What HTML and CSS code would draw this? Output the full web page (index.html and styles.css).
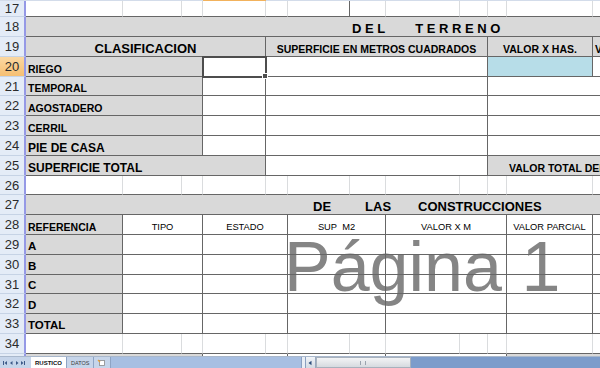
FILE: index.html
```html
<!DOCTYPE html>
<html lang="es">
<head>
<meta charset="utf-8">
<title>RUSTICO</title>
<link rel="stylesheet" href="styles.css">
</head>
<body>
<div class="app">
  <div class="colhead"><div class="ch-a"></div><div class="ch-sel"></div><div class="ch-b"></div></div>
  <div class="sheet">
    <!-- 17 -->
    <div class="rh">17</div>
    <div class="c lt bd-b"></div><div class="c lt bd-b"></div><div class="c lt bd-b"></div><div class="c lt bd-b"></div>
    <div class="c lt bd-b"></div><div class="c bd-r bd-b"></div><div class="c lt bd-b"></div><div class="c lt bd-b"></div>
    <div class="c lt bd-b"></div><div class="c lt bd-b"></div><div class="c lt bd-b"></div><div class="c lt bd-b"></div>
    <!-- 18 -->
    <div class="rh">18</div>
    <div class="c s12 gray bd-b title t-terreno"><span>D E L</span><span class="gap-terreno">T E R R E N O</span></div>
    <!-- 19 -->
    <div class="rh">19</div>
    <div class="c s4 gray bd-r bd-b ctr b f13">CLASIFICACION</div>
    <div class="c s5 gray bd-r bd-b ctr b">SUPERFICIE EN METROS CUADRADOS</div>
    <div class="c s2 gray bd-r bd-b ctr b">VALOR X HAS.</div>
    <div class="c gray bd-b b pl2">VALOR TOTAL</div>
    <!-- 20 -->
    <div class="rh rh-sel">20</div>
    <div class="c s3 gray bd-r bd-b lbl">RIEGO</div>
    <div class="c bd-r bd-b sel"></div>
    <div class="c s5 bd-r bd-b"></div>
    <div class="c s2 blue bd-r bd-b"></div>
    <div class="c bd-b"></div>
    <!-- 21 -->
    <div class="rh">21</div>
    <div class="c s3 gray bd-r bd-b lbl">TEMPORAL</div>
    <div class="c bd-r bd-b"></div>
    <div class="c s5 bd-r bd-b"></div>
    <div class="c s3 bd-b"></div>
    <!-- 22 -->
    <div class="rh">22</div>
    <div class="c s3 gray bd-r bd-b lbl">AGOSTADERO</div>
    <div class="c bd-r bd-b"></div>
    <div class="c s5 bd-r bd-b"></div>
    <div class="c s3 bd-b"></div>
    <!-- 23 -->
    <div class="rh">23</div>
    <div class="c s3 gray bd-r bd-b lbl">CERRIL</div>
    <div class="c bd-r bd-b"></div>
    <div class="c s5 bd-r bd-b"></div>
    <div class="c s3 bd-b"></div>
    <!-- 24 -->
    <div class="rh">24</div>
    <div class="c s3 gray bd-r bd-b lbl f12">PIE DE CASA</div>
    <div class="c bd-r bd-b"></div>
    <div class="c s5 bd-r bd-b"></div>
    <div class="c s3 bd-b"></div>
    <!-- 25 -->
    <div class="rh">25</div>
    <div class="c s4 gray bd-r bd-b lbl f12">SUPERFICIE TOTAL</div>
    <div class="c s5 bd-r bd-b"></div>
    <div class="c s3 gray bd-b b pl-total">VALOR TOTAL DEL TERRENO</div>
    <!-- 26 -->
    <div class="rh">26</div>
    <div class="c lt bd-b"></div><div class="c lt bd-b"></div><div class="c lt bd-b"></div><div class="c lt bd-b"></div>
    <div class="c lt bd-b"></div><div class="c lt bd-b"></div><div class="c lt bd-b"></div><div class="c lt bd-b"></div>
    <div class="c lt bd-b"></div><div class="c lt bd-b"></div><div class="c lt bd-b"></div><div class="c lt bd-b"></div>
    <!-- 27 -->
    <div class="rh">27</div>
    <div class="c s12 gray bd-b title t-constr"><span>DE</span><span class="gap-las">LAS</span><span class="gap-con">CONSTRUCCIONES</span></div>
    <!-- 28 -->
    <div class="rh">28</div>
    <div class="c gray bd-r bd-b lbl">REFERENCIA</div>
    <div class="c s2 bd-r bd-b ctr sub">TIPO</div>
    <div class="c s2 bd-r bd-b ctr sub">ESTADO</div>
    <div class="c s2 bd-r bd-b ctr sub">SUP&nbsp; M2</div>
    <div class="c s3 bd-r bd-b ctr sub">VALOR X M</div>
    <div class="c bd-r bd-b ctr sub">VALOR PARCIAL</div>
    <div class="c bd-b"></div>
    <!-- 29 -->
    <div class="rh">29</div>
    <div class="c gray bd-r bd-b lbl f115">A</div>
    <div class="c s2 bd-r bd-b"></div><div class="c s2 bd-r bd-b"></div><div class="c s2 bd-r bd-b"></div>
    <div class="c s3 bd-r bd-b"></div><div class="c bd-r bd-b"></div><div class="c bd-b"></div>
    <!-- 30 -->
    <div class="rh">30</div>
    <div class="c gray bd-r bd-b lbl f115">B</div>
    <div class="c s2 bd-r bd-b"></div><div class="c s2 bd-r bd-b"></div><div class="c s2 bd-r bd-b"></div>
    <div class="c s3 bd-r bd-b"></div><div class="c bd-r bd-b"></div><div class="c bd-b"></div>
    <!-- 31 -->
    <div class="rh">31</div>
    <div class="c gray bd-r bd-b lbl f115">C</div>
    <div class="c s2 bd-r bd-b"></div><div class="c s2 bd-r bd-b"></div><div class="c s2 bd-r bd-b"></div>
    <div class="c s3 bd-r bd-b"></div><div class="c bd-r bd-b"></div><div class="c bd-b"></div>
    <!-- 32 -->
    <div class="rh">32</div>
    <div class="c gray bd-r bd-b lbl f115">D</div>
    <div class="c s2 bd-r bd-b"></div><div class="c s2 bd-r bd-b"></div><div class="c s2 bd-r bd-b"></div>
    <div class="c s3 bd-r bd-b"></div><div class="c bd-r bd-b"></div><div class="c bd-b"></div>
    <!-- 33 -->
    <div class="rh">33</div>
    <div class="c gray bd-r bd-b lbl f115">TOTAL</div>
    <div class="c s2 bd-r bd-b"></div><div class="c s2 bd-r bd-b"></div><div class="c s2 bd-r bd-b"></div>
    <div class="c s3 bd-r bd-b"></div><div class="c bd-r bd-b"></div><div class="c bd-b"></div>
    <!-- 34 -->
    <div class="rh">34</div>
    <div class="c lt bd-b"></div><div class="c lt bd-b"></div><div class="c lt bd-b"></div><div class="c lt bd-b"></div>
    <div class="c lt bd-b"></div><div class="c lt bd-b"></div><div class="c lt bd-b"></div><div class="c lt bd-b"></div>
    <div class="c lt bd-b"></div><div class="c lt bd-b"></div><div class="c lt bd-b"></div><div class="c lt bd-b"></div>
    <!-- 35 -->
    <div class="rh">35</div>
    <div class="c s3 gray bd-r"></div>
    <div class="c s2 bd-r"></div>
    <div class="c s2 bd-r"></div>
    <div class="c s3 bd-r"></div>
    <div class="c s2 gray"></div>

    <div class="watermark">Página 1</div>
  </div>
  <div class="tabbar">
    <div class="nav">
      <svg width="28" height="8" viewBox="0 0 28 8">
        <rect x="2" y="2" width="1" height="4" fill="#3c5a88"/><path d="M3.5 4 L6 2 L6 6 Z" fill="#3c5a88"/>
        <path d="M9 4 L11.5 2 L11.5 6 Z" fill="#3c5a88"/>
        <path d="M17.5 4 L15 2 L15 6 Z" fill="#3c5a88"/>
        <path d="M22.5 4 L20 2 L20 6 Z" fill="#3c5a88"/><rect x="23" y="2" width="1" height="4" fill="#3c5a88"/>
      </svg>
    </div>
    <div class="tab active">RUSTICO</div>
    <div class="tab">DATOS</div>
    <div class="tab tabnew">
      <svg width="10" height="8" viewBox="0 0 10 8"><rect x="2.5" y="1.5" width="5" height="5" fill="#fff" stroke="#8a8a8a" stroke-width="0.8"/><path d="M1 1 L3 3" stroke="#e8a23a" stroke-width="1.2"/></svg>
    </div>
    <div class="tabfill"></div>
    <div class="split"></div>
    <div class="sbtn"><svg width="6" height="6" viewBox="0 0 6 6"><path d="M1.5 3 L4.5 0.8 L4.5 5.2 Z" fill="#2f4e7c"/></svg></div>
    <div class="thumb"><span class="grip"></span></div>
    <div class="track"></div>
  </div>
</div>
</body>
</html>
```

FILE: styles.css
```css
html, body {
  margin: 0;
  padding: 0;
}
body {
  width: 600px;
  height: 368px;
  overflow: hidden;
  background: #ffffff;
  font-family: "Liberation Sans", Arial, sans-serif;
  color: #000;
}
.app {
  display: flex;
  flex-direction: column;
  width: 600px;
  height: 368px;
}
.colhead {
  display: flex;
  height: 1px;
  flex: none;
}
.ch-a { width: 203px; background: #d3dcea; }
.ch-sel { width: 63px; background: #f2b25c; }
.ch-b { flex: 1; background: #d3dcea; }

.sheet {
  position: relative;
  z-index: 0;
  background: #ffffff;
  flex: none;
  height: 355px;
  overflow: hidden;
  display: grid;
  grid-template-columns: 26px 97px 59px 21px 63px 22px 62px 36px 74px 28px 19px 86px 87px;
  grid-template-rows: 16px 20px 20px 20px 19px 20px 20px 20px 20px 19px 20px 20px 20px 20px 19px 20px 20px 20px 20px;
  width: 680px;
}

.rh {
  box-sizing: border-box;
  display: flex;
  align-items: center;
  justify-content: center;
  background: #e4ecf7;
  border-bottom: 1px solid #c6d3e5;
  border-right: 2px solid #9599e6;
  font-size: 13px;
  color: #2b2b2b;
  line-height: 1;
}
.rh-sel {
  background: linear-gradient(#fbd8a2, #f6bf72);
}

.c {
  box-sizing: border-box;
  display: flex;
  align-items: flex-end;
  min-width: 0;
  overflow: hidden;
  white-space: nowrap;
  font-size: 10.5px;
  line-height: 1;
  padding-bottom: 1.5px;
}
.s2 { grid-column: span 2; }
.s3 { grid-column: span 3; }
.s4 { grid-column: span 4; }
.s5 { grid-column: span 5; }
.s12 { grid-column: span 12; }

.lt { border-right: 1px solid #dadcde; }
.bd-r { border-right: 1px solid #666666; }
.bd-b { border-bottom: 1px solid #666666; }
.gray { background: #d9d9d9; }
.blue { background: #b7dde8; }
.ctr { justify-content: center; }
.b { font-weight: bold; }
.f13 { font-size: 13px; }
.f12 { font-size: 12px; }
.f115 { font-size: 11.5px; }
.pl2 { padding-left: 2px; }
.pl-total { padding-left: 21px; }

.lbl {
  font-weight: bold;
  padding-left: 2px;
}
.sub {
  font-size: 9.3px;
  padding-bottom: 2px;
}

.title {
  font-weight: bold;
  font-size: 13px;
}
.t-terreno { padding-left: 326px; }
.gap-terreno { margin-left: 30px; }
.t-constr { padding-left: 287px; }
.gap-las { margin-left: 34px; }
.gap-con { margin-left: 27px; }

.sel {
  position: relative;
  overflow: visible;
  outline: 2px solid #4d4d4d;
  outline-offset: -1px;
  z-index: 2;
}
.sel::after {
  content: "";
  position: absolute;
  right: -3px;
  bottom: -3px;
  width: 4px;
  height: 4px;
  background: #4d4d4d;
  border: 1px solid #fff;
}

.watermark {
  position: absolute;
  left: 284px;
  top: 240px;
  font-size: 70px;
  line-height: 0.75;
  color: #858585;
  white-space: nowrap;
  z-index: -1;
  pointer-events: none;
}

.tabbar {
  flex: none;
  height: 12px;
  display: flex;
  align-items: stretch;
  background: #c6d5ea;
  border-top: 1px solid #a9b8cc;
  box-sizing: border-box;
}
.nav {
  width: 30px;
  display: flex;
  align-items: center;
  justify-content: center;
}
.tab {
  display: flex;
  align-items: center;
  padding: 0 4px;
  font-size: 5.5px;
  color: #3a3a3a;
  border-right: 1px solid #8ea4c4;
}
.tab.active {
  background: #ffffff;
  font-weight: bold;
  font-size: 6px;
  color: #101010;
  margin-left: 1px;
}
.tabnew {
  padding: 0 3px;
}
.tabfill {
  flex: 1;
  background: #a7bfe2;
}
.split {
  width: 3px;
  background: #e9eef5;
  border-left: 1px solid #8aa0c0;
  border-right: 1px solid #8aa0c0;
}
.sbtn {
  width: 9px;
  display: flex;
  align-items: center;
  justify-content: center;
  background: linear-gradient(#f1f4f8, #d3dae3);
  border-right: 1px solid #9aaac0;
}
.thumb {
  width: 95px;
  display: flex;
  align-items: center;
  justify-content: center;
  background: linear-gradient(#f3f4f6, #d6dadf);
  border: 1px solid #a7b1bd;
  box-sizing: border-box;
}
.grip {
  width: 4px;
  height: 4px;
  border-left: 1px solid #9aa3ae;
  border-right: 1px solid #9aa3ae;
}
.track {
  flex: 1;
  background: #7c9ccb;
}
```
